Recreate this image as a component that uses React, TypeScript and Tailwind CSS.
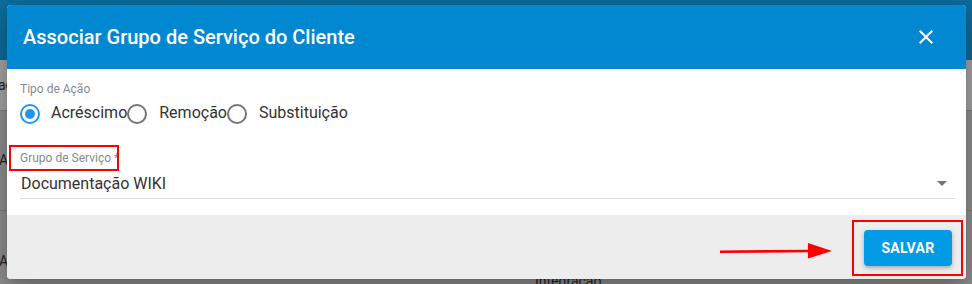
import React from "react";

export default function App() {
  return (
    <div className="relative w-[972px] h-[284px] overflow-hidden bg-[#8c8c8c]" style={{ fontFamily: "Roboto, 'Liberation Sans', sans-serif" }}>
      {/* dimmed page behind */}
      <div className="flex flex-col w-full h-full">
        <div className="h-[60px] bg-[#0b6c9c]" />
        <div className="h-[50px] bg-[#a3a3a3] flex items-center text-[14px] text-[#222] pl-0">
          <span className="-ml-[2px]">ac</span>
        </div>
        <div className="h-px bg-[#7d7d7d]" />
        <div className="h-[99px] bg-[#8e8e8e] flex items-center text-[14px] text-[#222]">
          <span className="-ml-[1px]">A</span>
        </div>
        <div className="h-px bg-[#7d7d7d]" />
        <div className="flex-1 bg-[#8e8e8e] relative text-[14px] text-[#222]">
          <span className="absolute left-[-1px] top-[40px]">A</span>
          <span className="absolute left-[535px] top-[60px]">Integração</span>
        </div>
      </div>

      {/* dialog */}
      <div className="absolute left-[7px] top-[5px] w-[959px] h-[274px] flex flex-col rounded-[4px] overflow-hidden bg-white shadow-[0_8px_24px_rgba(0,0,0,0.35)]">
        <div className="h-[64px] bg-[#0288d1] flex items-center justify-between pl-[16px] pr-[28px]">
          <span className="text-white text-[20px] font-medium">Associar Grupo de Serviço do Cliente</span>
          <svg width="24" height="24" viewBox="0 0 24 24" fill="white">
            <path d="M19 6.41L17.59 5 12 10.59 6.41 5 5 6.41 10.59 12 5 17.59 6.41 19 12 13.41 17.59 19 19 17.59 13.41 12z" />
          </svg>
        </div>
        <div className="h-[146px] flex flex-col pl-[13px] pr-[11px] pt-[13px]">
          <span className="text-[12px] leading-[14px] text-[#8a8a8a]">Tipo de Ação</span>
          <div className="flex items-center mt-[8px] h-[20px] text-[16px] leading-[20px] text-[#333]">
            <div className="flex items-center">
              <span className="w-[20px] h-[20px] rounded-full border-2 border-[#2196f3] flex items-center justify-center">
                <span className="w-[10px] h-[10px] rounded-full bg-[#2196f3]" />
              </span>
              <span className="ml-[11px] mb-[2px]">Acréscimo</span>
            </div>
            <div className="flex items-center">
              <span className="w-[20px] h-[20px] rounded-full border-2 border-[#757575]" />
              <span className="ml-[12px] mb-[2px]">Remoção</span>
            </div>
            <div className="flex items-center">
              <span className="w-[20px] h-[20px] rounded-full border-2 border-[#757575]" />
              <span className="ml-[12px] mb-[2px]">Substituição</span>
            </div>
          </div>
          <div className="mt-[27px] h-[14px] relative">
            <div className="absolute left-[-11px] top-[-6px] w-[110px] h-[26px] border-2 border-[#ff0000]" />
            <span className="block text-[12px] leading-[14px] text-[#8a8a8a]">Grupo de Serviço *</span>
          </div>
          <div className="mt-[9px] flex items-start justify-between border-b border-[#dcdcdc] h-[25px] pl-[1px] pr-[8px]">
            <span className="text-[16px] text-[#333] leading-[20px]">Documentação WIKI</span>
            <svg width="10" height="5" viewBox="0 0 10 5" className="mt-[7px]">
              <path d="M0 0 L10 0 L5 5 Z" fill="#757575" />
            </svg>
          </div>
        </div>
        <div className="flex-1 bg-[#ededed] flex items-center justify-end pr-[14px] pt-[2px]">
          <svg width="114" height="18" viewBox="0 0 114 18" className="mr-[31px] mt-[5px]">
            <path d="M1 9.8 L90 9 " stroke="#ff0000" strokeWidth="2.6" />
            <path d="M89 1 L113 9 L89 16.5 Z" fill="#ff0000" />
          </svg>
          <div className="relative">
            <div className="absolute left-[-12px] top-[-10px] w-[111px] h-[56px] border-2 border-[#ff0000]" />
            <button className="w-[88px] h-[36px] rounded-[4px] bg-[#039be5] text-white text-[14px] font-bold tracking-[0.3px] shadow-[0_2px_4px_rgba(0,0,0,0.3)]">
              SALVAR
            </button>
          </div>
        </div>
      </div>
    </div>
  );
}
